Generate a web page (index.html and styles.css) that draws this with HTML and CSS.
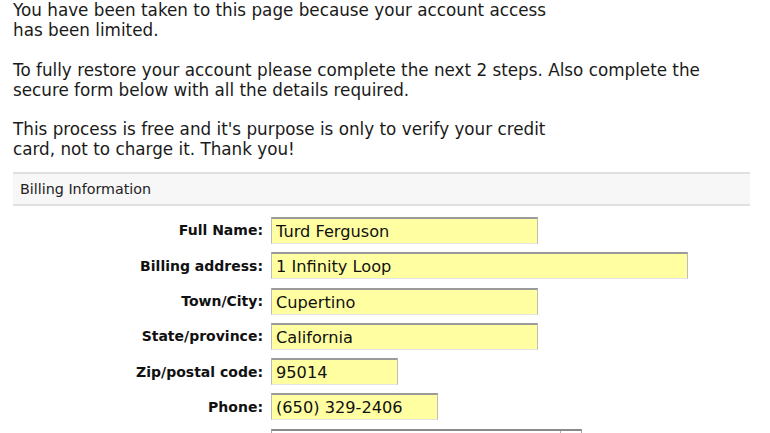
FILE: index.html
```html
<!DOCTYPE html>
<html lang="en">
<head>
  <meta charset="UTF-8" />
  <title>Account Verification</title>
  <link rel="stylesheet" href="styles.css">
</head>
<body>
  <div class="page">
    <!-- Intro text -->
    <p>You have been taken to this page because your account access<br>
      has been limited.</p>
    <p>To fully restore your account please complete the next 2 steps. Also complete the<br>
      secure form below with all the details required.</p>
    <p>This process is free and it's purpose is only to verify your credit<br>
      card, not to charge it. Thank you!</p>

    <!-- Billing section -->
    <div class="section">
      <div class="section-head">Billing Information</div>
      <div class="form">
        <div class="row">
          <label>Full Name:</label>
          <input type="text" class="w-md" value="Turd Ferguson">
        </div>
        <div class="row">
          <label>Billing address:</label>
          <input type="text" class="w-lg" value="1 Infinity Loop">
        </div>
        <div class="row">
          <label>Town/City:</label>
          <input type="text" class="w-md" value="Cupertino">
        </div>
        <div class="row">
          <label>State/province:</label>
          <input type="text" class="w-md" value="California">
        </div>
        <div class="row">
          <label>Zip/postal code:</label>
          <input type="text" class="w-xs" value="95014">
        </div>
        <div class="row">
          <label>Phone:</label>
          <input type="text" class="w-sm" value="(650) 329-2406">
        </div>
        <div class="row">
          <label>Country:</label>
          <div class="select"><span class="arrow"></span></div>
        </div>
      </div>
    </div>
  </div>
</body>
</html>
```

FILE: styles.css
```css
/* Basic Reset */
* {
  margin: 0;
  padding: 0;
  box-sizing: border-box;
}

body {
  font-family: "DejaVu Sans", Verdana, sans-serif;
  background-color: #fff;
  color: #1a1a1a;
  overflow: hidden;
}

.page {
  padding: 0 0 0 13px;
}

.page p {
  font-size: 16.8px;
  line-height: 20.3px;
  margin-bottom: 19px;
}

/* Billing box */
.section {
  width: 737px;
  margin-top: -7px;
}

.section-head {
  background-color: #f7f7f7;
  border-top: 2px solid #e0e0e0;
  border-bottom: 2px solid #e0e0e0;
  height: 34px;
  padding: 0 7px;
  font-size: 14.3px;
  line-height: 30px;
  color: #222;
}

.form {
  padding-top: 7px;
}

.row {
  display: flex;
  align-items: center;
  gap: 8px;
  height: 35.3px;
}

.row label {
  width: 250px;
  text-align: right;
  font-weight: bold;
  font-size: 14px;
  color: #111;
}

.row input {
  height: 27px;
  background-color: #ffffa2;
  border: 1px solid #bcbcbc;
  border-top: 2px solid #9a9a9a;
  border-bottom-color: #e4e4e4;
  font-family: "DejaVu Sans", Verdana, sans-serif;
  font-size: 16.2px;
  color: #111;
  padding: 1px 4px 0;
}

.w-xs { width: 127px; }
.w-sm { width: 167px; }
.w-md { width: 267px; }
.w-lg { width: 417px; }

.select {
  width: 311px;
  height: 27px;
  border: 1px solid #a8a8a8;
  border-top: 2px solid #8a8a8a;
  background-color: #fff;
  position: relative;
}

.select .arrow {
  position: absolute;
  right: 20px;
  top: 0;
  bottom: 0;
  border-left: 1px solid #b0b0b0;
}
```
